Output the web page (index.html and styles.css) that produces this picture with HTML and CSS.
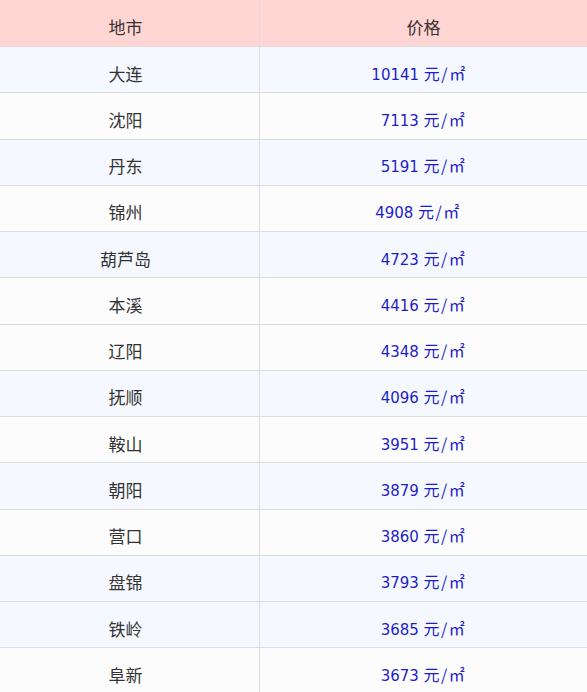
FILE: index.html
```html
<!DOCTYPE html>
<html lang="zh-CN">
<head>
<meta charset="utf-8">
<title>辽宁各地市房价</title>
<link rel="stylesheet" href="styles.css">
</head>
<body>
<table class="price-table">
  <thead>
    <tr><th class="city">地市</th><th class="price">价格</th></tr>
  </thead>
  <tbody>
    <tr class="tint"><td class="city">大连</td><td class="price shift-1"><span class="num">10141 </span><span class="unit">元/㎡</span></td></tr>
    <tr class="plain"><td class="city">沈阳</td><td class="price"><span class="num">7113 </span><span class="unit">元/㎡</span></td></tr>
    <tr class="tint"><td class="city">丹东</td><td class="price"><span class="num">5191 </span><span class="unit">元/㎡</span></td></tr>
    <tr class="plain"><td class="city">锦州</td><td class="price shift-2"><span class="num">4908 </span><span class="unit">元/㎡</span></td></tr>
    <tr class="tint"><td class="city">葫芦岛</td><td class="price"><span class="num">4723 </span><span class="unit">元/㎡</span></td></tr>
    <tr class="plain"><td class="city">本溪</td><td class="price"><span class="num">4416 </span><span class="unit">元/㎡</span></td></tr>
    <tr class="plain"><td class="city">辽阳</td><td class="price"><span class="num">4348 </span><span class="unit">元/㎡</span></td></tr>
    <tr class="tint"><td class="city">抚顺</td><td class="price"><span class="num">4096 </span><span class="unit">元/㎡</span></td></tr>
    <tr class="plain"><td class="city">鞍山</td><td class="price"><span class="num">3951 </span><span class="unit">元/㎡</span></td></tr>
    <tr class="tint"><td class="city">朝阳</td><td class="price"><span class="num">3879 </span><span class="unit">元/㎡</span></td></tr>
    <tr class="plain"><td class="city">营口</td><td class="price"><span class="num">3860 </span><span class="unit">元/㎡</span></td></tr>
    <tr class="tint"><td class="city">盘锦</td><td class="price"><span class="num">3793 </span><span class="unit">元/㎡</span></td></tr>
    <tr class="tint"><td class="city">铁岭</td><td class="price"><span class="num">3685 </span><span class="unit">元/㎡</span></td></tr>
    <tr class="plain"><td class="city">阜新</td><td class="price"><span class="num">3673 </span><span class="unit">元/㎡</span></td></tr>
  </tbody>
</table>
</body>
</html>
```
FILE: styles.css
```css
html, body {
  margin: 0;
  padding: 0;
  background: #ffffff;
}

body {
  font-family: "Noto Sans CJK SC", "Noto Sans", sans-serif;
  font-size: 16px;
  color: #333333;
}

.price-table {
  width: 587px;
  border-collapse: collapse;
  table-layout: fixed;
}

.price-table th,
.price-table td {
  padding: 8px 0 0 0;
  text-align: center;
  vertical-align: middle;
  line-height: 20px;
  border-bottom: 1px solid #dcdcdc;
}

.price-table th {
  height: 38px;
  background: #ffd6d4;
  font-weight: normal;
  color: #3a3030;
  font-size: 17px;
}

.price-table td {
  height: 37.25px;
}

.price-table .city {
  width: 251px;
  border-right: 1px solid #dcdcdc;
  padding-right: 8px;
}

.price-table td.city {
  font-size: 17px;
}

.price-table td.price {
  color: #1e1ec8;
}

.num {
  font-family: "DejaVu Sans", sans-serif;
  font-size: 15px;
}

.unit {
  letter-spacing: 1.5px;
}

.price-table td.shift-1 {
  padding-right: 9px;
}

.price-table td.shift-2 {
  padding-right: 11px;
}

.tint td {
  background: #f5f9ff;
}

.plain td {
  background: #fcfcfd;
}
```
